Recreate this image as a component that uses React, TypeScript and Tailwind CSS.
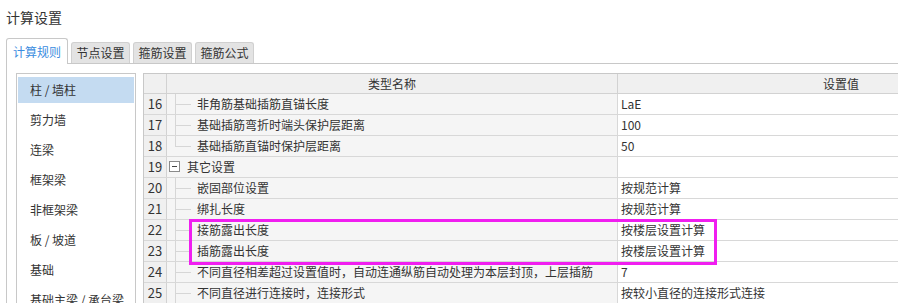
import React from 'react';

interface Row {
  no: number;
  name: string;
  value: string;
  kind?: 'group' | 'last';
}

const rows: Row[] = [
  { no: 16, name: '非角筋基础插筋直锚长度', value: 'LaE' },
  { no: 17, name: '基础插筋弯折时端头保护层距离', value: '100' },
  { no: 18, name: '基础插筋直锚时保护层距离', value: '50', kind: 'last' },
  { no: 19, name: '其它设置', value: '', kind: 'group' },
  { no: 20, name: '嵌固部位设置', value: '按规范计算' },
  { no: 21, name: '绑扎长度', value: '按规范计算' },
  { no: 22, name: '接筋露出长度', value: '按楼层设置计算' },
  { no: 23, name: '插筋露出长度', value: '按楼层设置计算' },
  { no: 24, name: '不同直径相差超过设置值时，自动连通纵筋自动处理为本层封顶，上层插筋', value: '7' },
  { no: 25, name: '不同直径进行连接时，连接形式', value: '按较小直径的连接形式连接' },
];

const categories = ['柱 / 墙柱', '剪力墙', '连梁', '框架梁', '非框架梁', '板 / 坡道', '基础', '基础主梁 / 承台梁'];

const tabs = ['计算规则', '节点设置', '箍筋设置', '箍筋公式'];

export default function App() {
  return (
    <div
      className="relative w-[898px] h-[303px] overflow-hidden bg-white text-[#333]"
      style={{ fontFamily: '"Noto Sans CJK SC", "Noto Sans", sans-serif' }}
    >
      {/* Title */}
      <div className="h-[38px] pl-[6px] pt-[8px] text-[14px] leading-[18px]">计算设置</div>

      {/* Tabs */}
      <div className="flex items-end h-[25px] pl-[6px] gap-[3px]">
        {tabs.map((t, i) =>
          i === 0 ? (
            <div
              key={t}
              className="relative z-10 -mb-px h-[26px] w-[62px] flex items-center justify-center text-[12px] text-[#3b8de0] bg-white border border-b-0 border-[#c8c8c8] rounded-t-[3px]"
            >
              {t}
            </div>
          ) : (
            <div
              key={t}
              className="h-[21px] w-[59px] flex items-center justify-center text-[12px] bg-[#e3e3e3] border border-b-0 border-[#d0d0d0] rounded-t-[3px]"
            >
              {t}
            </div>
          )
        )}
      </div>

      {/* Panel */}
      <div className="ml-[6px] border-l border-t border-[#c8c8c8] flex pt-[9px] pl-[9px] gap-[7px] h-[240px]">
        {/* Category list */}
        <div className="w-[120px] shrink-0 border border-b-0 border-[#c8c8c8] pt-px px-px text-[12px]">
          {categories.map((c, i) => (
            <div key={c} className="h-[30px] flex items-center">
              <div
                className={`w-full h-[26px] flex items-center pl-[12px] whitespace-nowrap ${
                  i === 0 ? 'bg-[#c4dbf1]' : ''
                }`}
              >
                {c}
              </div>
            </div>
          ))}
        </div>

        {/* Grid */}
        <div className="shrink-0 w-[922px] border-l border-t border-[#c8c8c8] text-[12px]">
          <div className="flex h-[20px] bg-[#f0f0f0] border-b border-[#d2d2d2]">
            <div className="w-[23px] border-r border-[#d2d2d2]" />
            <div className="w-[451px] border-r border-[#d2d2d2] flex items-center justify-center">类型名称</div>
            <div className="flex-1 flex items-center justify-center pr-[1px]">设置值</div>
          </div>
          {rows.map((r) => (
            <div key={r.no} className="flex h-[21px] border-b border-[#d8d8d8]">
              <div className="w-[23px] bg-[#f0f0f0] border-r border-[#d2d2d2] flex items-center justify-center text-[13px]">
                {r.no}
              </div>
              <div className="relative w-[451px] bg-[#f5f5f5] border-r border-[#d8d8d8] flex items-center whitespace-nowrap">
                {r.kind === 'group' ? (
                  <>
                    <div className="absolute left-[2px] top-[4px] w-[11px] h-[11px] border border-[#8a8a8a] bg-white flex items-center justify-center">
                      <div className="w-[5px] h-px bg-[#444]" />
                    </div>
                    <span className="pl-[20px]">{r.name}</span>
                  </>
                ) : (
                  <>
                    <div
                      className={`absolute left-[8px] top-0 w-px bg-[#d6d6d6] ${
                        r.kind === 'last' ? 'h-[11px]' : 'h-full'
                      }`}
                    />
                    <div className="absolute left-[8px] top-[10px] w-[16px] h-px bg-[#d6d6d6]" />
                    <span className="pl-[30px]">{r.name}</span>
                  </>
                )}
              </div>
              <div className="flex-1 bg-white flex items-center pl-[3px] whitespace-nowrap">{r.value}</div>
            </div>
          ))}
        </div>
      </div>

      {/* Highlight annotation */}
      <div className="absolute left-[189px] top-[219px] w-[528px] h-[46px] border-[3px] border-[#f01ef0] pointer-events-none" />
    </div>
  );
}
